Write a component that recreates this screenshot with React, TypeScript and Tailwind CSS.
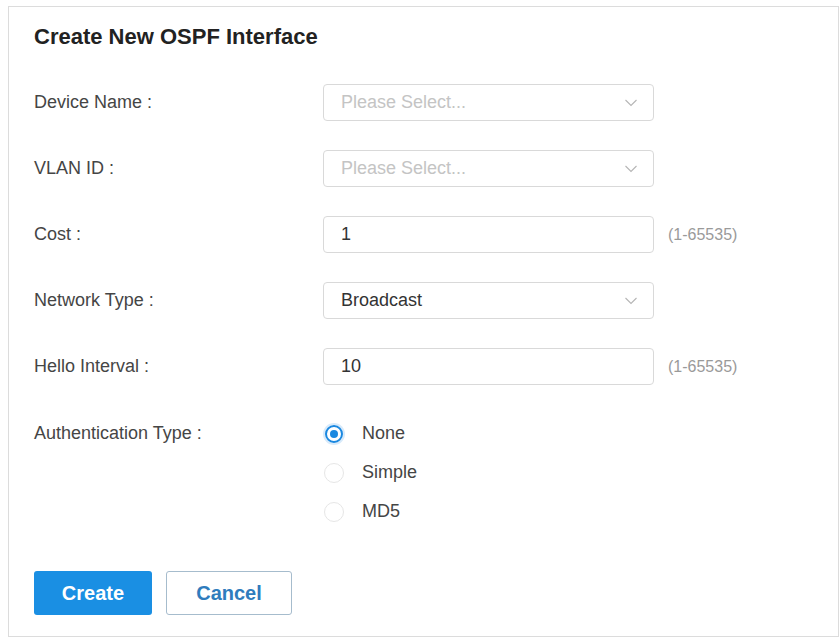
import React from "react";

const Chevron = () => (
  <svg className="w-[12px] h-[8px]" viewBox="0 0 12 8" fill="none">
    <path d="M0.5 1 L6 6.5 L11.5 1" stroke="#b5b5b5" strokeWidth="1.1" />
  </svg>
);

const Row = ({ label, children }: { label: string; children: React.ReactNode }) => (
  <div className="flex items-center h-[37px]">
    <div className="w-[289px] text-[18px] text-[#454545]">{label}</div>
    {children}
  </div>
);

const Select = ({ value, placeholder }: { value?: string; placeholder?: string }) => (
  <div className="w-[331px] h-[37px] border border-[#d9d9d9] rounded-[4px] flex items-center justify-between pl-[17px] pr-[16px]">
    {value ? (
      <span className="text-[18px] text-[#333]">{value}</span>
    ) : (
      <span className="text-[18px] text-[#c4c4c4]">{placeholder}</span>
    )}
    <Chevron />
  </div>
);

const Input = ({ value }: { value: string }) => (
  <>
    <div className="w-[331px] h-[37px] border border-[#d9d9d9] rounded-[4px] flex items-center pl-[17px]">
      <span className="text-[18px] text-[#333]">{value}</span>
    </div>
    <span className="ml-[14px] text-[16px] text-[#9a9a9a]">(1-65535)</span>
  </>
);

const Radio = ({ label, checked }: { label: string; checked?: boolean }) => (
  <div className="flex items-center h-[39px]">
    {checked ? (
      <div className="ml-[2px] w-[18px] h-[18px] rounded-full border-2 border-[#1a88e0] shadow-[0_0_0_2px_#d8eafa] flex items-center justify-center">
        <div className="w-[8px] h-[8px] rounded-full bg-[#1a88e0]" />
      </div>
    ) : (
      <div className="ml-[1px] w-[20px] h-[20px] rounded-full border border-[#e6e6e6]" />
    )}
    <span className={`${checked ? "ml-[19px]" : "ml-[18px]"} text-[18px] text-[#454545]`}>{label}</span>
  </div>
);

export default function App() {
  return (
    <div
      className="w-[840px] h-[637px] bg-white pl-[8px] pt-[6px]"
      style={{ fontFamily: '"Liberation Sans", Arial, sans-serif' }}
    >
      <div className="w-[831px] h-[631px] border border-[#dcdcdc] pl-[25px] pt-[17px]">
        <div className="text-[22px] leading-[26px] font-bold text-[#222]">
          Create New OSPF Interface
        </div>

        <div className="mt-[34px] flex flex-col gap-[29px]">
          <Row label="Device Name :">
            <Select placeholder="Please Select..." />
          </Row>
          <Row label="VLAN ID :">
            <Select placeholder="Please Select..." />
          </Row>
          <Row label="Cost :">
            <Input value="1" />
          </Row>
          <Row label="Network Type :">
            <Select value="Broadcast" />
          </Row>
          <Row label="Hello Interval :">
            <Input value="10" />
          </Row>
          <div className="flex">
            <div className="w-[289px] h-[39px] flex items-center text-[18px] text-[#454545]">
              Authentication Type :
            </div>
            <div className="flex flex-col">
              <Radio label="None" checked />
              <Radio label="Simple" />
              <Radio label="MD5" />
            </div>
          </div>
        </div>

        <div className="mt-[40px] flex gap-[14px]">
          <button className="w-[118px] h-[44px] rounded-[3px] bg-[#1a8fe3] text-white text-[20px] font-bold">
            Create
          </button>
          <button className="w-[126px] h-[44px] rounded-[3px] border border-[#a6bccd] bg-white text-[#2f7cbd] text-[20px] font-bold">
            Cancel
          </button>
        </div>
      </div>
    </div>
  );
}
